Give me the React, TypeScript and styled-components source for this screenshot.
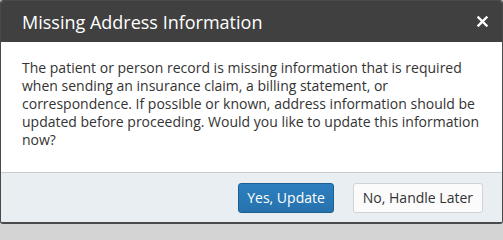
import React from "react";
import styled, { createGlobalStyle } from "styled-components";

const Global = createGlobalStyle`
  html, body { margin: 0; padding: 0; background: #d4d4d4; }
  body { font-family: "Open Sans", "Noto Sans", sans-serif; }
  * { box-sizing: border-box; }
`;

const Dialog = styled.div`
  width: 503px;
  height: 224px;
  border: 1px solid #4a4a4a;
  border-bottom-width: 2px;
  border-radius: 3px;
  overflow: hidden;
  display: flex;
  flex-direction: column;
  background: #fff;
`;

const Header = styled.div`
  height: 41px;
  background: #404040;
  display: flex;
  align-items: center;
  justify-content: space-between;
  padding: 0 12px 0 21px;
  flex-shrink: 0;
`;

const Title = styled.h1`
  margin: 0;
  font-size: 18px;
  font-weight: 400;
  color: #fff;
`;

const Close = styled.button`
  background: none;
  border: none;
  padding: 0;
  width: 16px;
  height: 16px;
  display: flex;
  align-items: center;
  justify-content: center;
  cursor: pointer;
`;

const Body = styled.div`
  flex: 1;
  padding: 17px 21px 0 21px;
  font-size: 14px;
  line-height: 18px;
  color: #333;
`;

const Footer = styled.div`
  height: 50px;
  flex-shrink: 0;
  background: #e8eef2;
  border-top: 1px solid #c6ccd0;
  display: flex;
  align-items: center;
  justify-content: flex-end;
  gap: 19px;
  padding: 0 19px 0 0;
`;

const Button = styled.button<{ $primary?: boolean }>`
  height: 30px;
  border-radius: 3px;
  font-family: "Open Sans", "Noto Sans", sans-serif;
  font-size: 14px;
  cursor: pointer;
  ${(p) =>
    p.$primary
      ? `background: linear-gradient(#2d7fbf, #2672ad);
         border: 1px solid #1e5f91;
         color: #fff;
         padding: 0 8px;`
      : `background: #fbfbfb;
         border: 1px solid #cfd3d6;
         color: #333;
         padding: 0 9px;`}
`;

export default function App() {
  return (
    <>
      <Global />
      <Dialog>
        <Header>
          <Title>Missing Address Information</Title>
          <Close aria-label="Close">
            <svg width="11" height="11" viewBox="0 0 11 11">
              <path d="M1.5 1.5 L9.5 9.5 M9.5 1.5 L1.5 9.5" stroke="#fff" strokeWidth="2.4" strokeLinecap="square" />
            </svg>
          </Close>
        </Header>
        <Body>
          The patient or person record is missing information that is required
          when sending an insurance claim, a billing statement, or
          correspondence. If possible or known, address information should be
          updated before proceeding. Would you like to update this information
          now?
        </Body>
        <Footer>
          <Button $primary>Yes, Update</Button>
          <Button>No, Handle Later</Button>
        </Footer>
      </Dialog>
    </>
  );
}
